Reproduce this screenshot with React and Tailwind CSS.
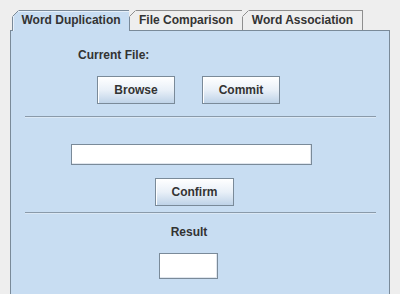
import React from "react";

const font = { fontFamily: '"Liberation Sans", Arial, sans-serif' };

function Corner({ stroke }) {
  return (
    <svg
      className="absolute left-[-1px] top-[-1px]"
      width="7"
      height="7"
      viewBox="0 0 7 7"
    >
      <polygon points="0,0 7,0 7,0.5 0.5,7 0,7" fill="#eeeeee" />
      <line x1="0.5" y1="6.5" x2="6.5" y2="0.5" stroke={stroke} strokeWidth="1" />
    </svg>
  );
}

function Button({ children, w }) {
  return (
    <div
      className={`${w} h-[28px] flex items-center justify-center border border-[#7a8a99] bg-gradient-to-b from-white via-[#e9f0f8] to-[#bfd3e8] shadow-[inset_1px_1px_0_#ffffff] text-[12px] font-bold text-[#333333]`}
    >
      {children}
    </div>
  );
}

export default function App() {
  return (
    <div
      className="w-[400px] h-[294px] bg-[#eeeeee] overflow-hidden flex flex-col"
      style={font}
    >
      {/* Tabs */}
      <div className="flex pt-[10px] pl-[12px] h-[30px] items-start relative z-10">
        <div className="relative w-[118px] h-[21px] bg-[#c8ddf2] border-l border-t border-r border-[#7a8a99] shadow-[inset_1px_1px_0_#e6f0fa] flex items-start justify-center pt-[1px] text-[12px] font-bold text-[#333333]">
          <Corner stroke="#7a8a99" />
          <span className="leading-[16px]">Word Duplication</span>
        </div>
        <div className="relative w-[113px] h-[20px] bg-[#eeeeee] border-t border-r border-[#8e8e8e] flex items-start justify-center pt-[1px] text-[12px] font-bold text-[#333333]">
          <Corner stroke="#8e8e8e" />
          <span className="leading-[16px]">File Comparison</span>
        </div>
        <div className="relative w-[120px] h-[20px] bg-[#eeeeee] border-t border-r border-[#8e8e8e] flex items-start justify-center pt-[1px] text-[12px] font-bold text-[#333333]">
          <Corner stroke="#8e8e8e" />
          <span className="leading-[16px]">Word Association</span>
        </div>
      </div>

      {/* Panel */}
      <div className="ml-[10px] w-[380px] flex-1 bg-[#c8ddf2] border-l border-t border-r border-[#7a8a99] flex flex-col items-start text-[12px] font-bold text-[#333333]">
        <div className="ml-[67px] mt-[17px] leading-[14px]">Current File:</div>
        <div className="flex mt-[14px] ml-[86px] gap-[27px]">
          <Button w="w-[78px]">Browse</Button>
          <Button w="w-[78px]">Commit</Button>
        </div>
        <div className="ml-[14px] mt-[12px] w-[351px] h-[2px] border-t border-[#8a9aaa] border-b border-b-[#dbe8f5]" />
        <div className="ml-[60px] mt-[26px] w-[241px] h-[21px] bg-white border border-[#7a8a99] shadow-[inset_-1px_-1px_0_#e0e6ee]" />
        <div className="ml-[144px] mt-[13px]">
          <Button w="w-[79px]">Confirm</Button>
        </div>
        <div className="ml-[14px] mt-[6px] w-[351px] h-[2px] border-t border-[#8a9aaa] border-b border-b-[#dbe8f5]" />
        <div className="w-full mt-[11px] leading-[14px] flex justify-center">
          <span className="ml-[-22px]">Result</span>
        </div>
        <div className="ml-[148px] mt-[14px] w-[59px] h-[26px] bg-white border border-[#7a8a99] shadow-[inset_-1px_-1px_0_#e0e6ee]" />
      </div>
    </div>
  );
}
